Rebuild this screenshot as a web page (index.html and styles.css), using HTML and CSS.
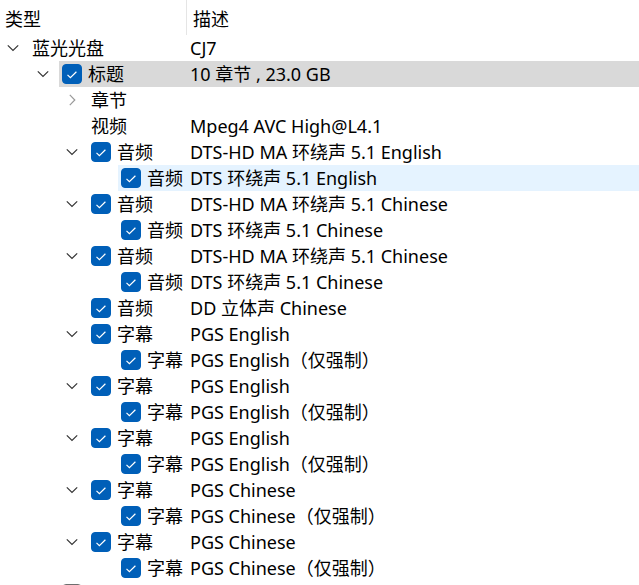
FILE: index.html
```html
<!DOCTYPE html>
<html>
<head>
  <title>光盘内容</title>
  <link rel="stylesheet" href="styles.css">
</head>
<body>
  <div class="tree">
    <div class="header">
      <div class="col-name">类型</div>
      <div class="col-desc">描述</div>
    </div>

    <div class="row lvl0">
      <div class="twisty"><span class="chev open"></span></div>
      <div class="item"><div class="lead"><span class="name">蓝光光盘</span></div><div class="desc">CJ7</div></div>
    </div>
    <div class="row lvl1 selected">
      <div class="twisty"><span class="chev open"></span></div>
      <div class="item"><div class="lead"><span class="check on"></span><span class="name">标题</span></div><div class="desc">10 章节 , 23.0 GB</div></div>
    </div>
    <div class="row lvl2">
      <div class="twisty"><span class="chev closed"></span></div>
      <div class="item"><div class="lead"><span class="name">章节</span></div><div class="desc"></div></div>
    </div>
    <div class="row lvl2">
      <div class="twisty"></div>
      <div class="item"><div class="lead"><span class="name">视频</span></div><div class="desc">Mpeg4 AVC High@L4.1</div></div>
    </div>

    <div class="row lvl2">
      <div class="twisty"><span class="chev open"></span></div>
      <div class="item"><div class="lead"><span class="check on"></span><span class="name">音频</span></div><div class="desc">DTS-HD MA 环绕声 5.1 English</div></div>
    </div>
    <div class="row lvl3 hover">
      <div class="twisty"></div>
      <div class="item"><div class="lead"><span class="check on"></span><span class="name">音频</span></div><div class="desc">DTS 环绕声 5.1 English</div></div>
    </div>
    <div class="row lvl2">
      <div class="twisty"><span class="chev open"></span></div>
      <div class="item"><div class="lead"><span class="check on"></span><span class="name">音频</span></div><div class="desc">DTS-HD MA 环绕声 5.1 Chinese</div></div>
    </div>
    <div class="row lvl3">
      <div class="twisty"></div>
      <div class="item"><div class="lead"><span class="check on"></span><span class="name">音频</span></div><div class="desc">DTS 环绕声 5.1 Chinese</div></div>
    </div>
    <div class="row lvl2">
      <div class="twisty"><span class="chev open"></span></div>
      <div class="item"><div class="lead"><span class="check on"></span><span class="name">音频</span></div><div class="desc">DTS-HD MA 环绕声 5.1 Chinese</div></div>
    </div>
    <div class="row lvl3">
      <div class="twisty"></div>
      <div class="item"><div class="lead"><span class="check on"></span><span class="name">音频</span></div><div class="desc">DTS 环绕声 5.1 Chinese</div></div>
    </div>
    <div class="row lvl2">
      <div class="twisty"></div>
      <div class="item"><div class="lead"><span class="check on"></span><span class="name">音频</span></div><div class="desc">DD 立体声 Chinese</div></div>
    </div>

    <div class="row lvl2">
      <div class="twisty"><span class="chev open"></span></div>
      <div class="item"><div class="lead"><span class="check on"></span><span class="name">字幕</span></div><div class="desc">PGS English</div></div>
    </div>
    <div class="row lvl3">
      <div class="twisty"></div>
      <div class="item"><div class="lead"><span class="check on"></span><span class="name">字幕</span></div><div class="desc">PGS English（仅强制）</div></div>
    </div>
    <div class="row lvl2">
      <div class="twisty"><span class="chev open"></span></div>
      <div class="item"><div class="lead"><span class="check on"></span><span class="name">字幕</span></div><div class="desc">PGS English</div></div>
    </div>
    <div class="row lvl3">
      <div class="twisty"></div>
      <div class="item"><div class="lead"><span class="check on"></span><span class="name">字幕</span></div><div class="desc">PGS English（仅强制）</div></div>
    </div>
    <div class="row lvl2">
      <div class="twisty"><span class="chev open"></span></div>
      <div class="item"><div class="lead"><span class="check on"></span><span class="name">字幕</span></div><div class="desc">PGS English</div></div>
    </div>
    <div class="row lvl3">
      <div class="twisty"></div>
      <div class="item"><div class="lead"><span class="check on"></span><span class="name">字幕</span></div><div class="desc">PGS English（仅强制）</div></div>
    </div>
    <div class="row lvl2">
      <div class="twisty"><span class="chev open"></span></div>
      <div class="item"><div class="lead"><span class="check on"></span><span class="name">字幕</span></div><div class="desc">PGS Chinese</div></div>
    </div>
    <div class="row lvl3">
      <div class="twisty"></div>
      <div class="item"><div class="lead"><span class="check on"></span><span class="name">字幕</span></div><div class="desc">PGS Chinese（仅强制）</div></div>
    </div>
    <div class="row lvl2">
      <div class="twisty"><span class="chev open"></span></div>
      <div class="item"><div class="lead"><span class="check on"></span><span class="name">字幕</span></div><div class="desc">PGS Chinese</div></div>
    </div>
    <div class="row lvl3">
      <div class="twisty"></div>
      <div class="item"><div class="lead"><span class="check on"></span><span class="name">字幕</span></div><div class="desc">PGS Chinese（仅强制）</div></div>
    </div>

    <!-- next title, only its checkbox edge is in view -->
    <div class="row lvl1">
      <div class="twisty"><span class="chev closed"></span></div>
      <div class="item"><div class="lead"><span class="check"></span></div><div class="desc"></div></div>
    </div>
  </div>
</body>
</html>
```

FILE: styles.css
```css
:root {
  --text-color: #000;
  --divider: #e5e5e5;
  --accent: #005fb8;
  --selected-bg: #d9d9d9;
  --hover-bg: #e5f3ff;
  --row-height: 26px;
  --desc-left: 190px;
}

html, body {
  margin: 0;
  height: 100%;
  overflow: hidden;
  background: #fff;
}

body {
  font-family: "Noto Sans", "Noto Sans CJK SC", sans-serif;
  font-size: 18px;
  color: var(--text-color);
}

.header {
  display: flex;
  height: 35px;
  align-items: stretch;
}

.col-name {
  width: 181px;
  padding-left: 5px;
  border-right: 1px solid var(--divider);
  display: flex;
  align-items: center;
}

.col-desc {
  padding-left: 6px;
  display: flex;
  align-items: center;
}

.row {
  display: flex;
  height: var(--row-height);
  line-height: var(--row-height);
  white-space: nowrap;
}

/* --x is where the item (highlight) starts for each level */
.lvl0 { --x: 29px; }
.lvl1 { --x: 59px; }
.lvl2 { --x: 88px; }
.lvl3 { --x: 118px; }

.twisty {
  box-sizing: border-box;
  width: var(--x);
  padding-left: calc(var(--x) - 22px);
  display: flex;
  align-items: center;
  flex: none;
}

.chev {
  display: block;
  width: 12px;
  height: 12px;
  background-repeat: no-repeat;
  background-position: center;
}

.chev.open {
  background-image: url("data:image/svg+xml,%3Csvg xmlns='http://www.w3.org/2000/svg' width='12' height='12' viewBox='0 0 12 12'%3E%3Cpath d='M0.8 3.4 L6 8.4 L11.2 3.4' fill='none' stroke='%23333' stroke-width='1.2'/%3E%3C/svg%3E");
}

.chev.closed {
  background-image: url("data:image/svg+xml,%3Csvg xmlns='http://www.w3.org/2000/svg' width='12' height='12' viewBox='0 0 12 12'%3E%3Cpath d='M3.8 0.8 L8.8 6 L3.8 11.2' fill='none' stroke='%23999' stroke-width='1.2'/%3E%3C/svg%3E");
}

.item {
  flex: 1;
  display: flex;
  min-width: 0;
}

.selected .item { background: var(--selected-bg); }
.hover .item { background: var(--hover-bg); }

.lead {
  box-sizing: border-box;
  width: calc(var(--desc-left) - var(--x));
  padding-left: 3px;
  display: flex;
  align-items: center;
  gap: 6px;
  flex: none;
}

.check {
  box-sizing: border-box;
  width: 20px;
  height: 20px;
  border-radius: 4px;
  border: 1px solid #6e6e6e;
  background: #fff;
  flex: none;
}

.check.on {
  border-color: var(--accent);
  background-color: var(--accent);
  background-repeat: no-repeat;
  background-position: center;
  background-image: url("data:image/svg+xml,%3Csvg xmlns='http://www.w3.org/2000/svg' width='18' height='18' viewBox='0 0 18 18'%3E%3Cpath d='M4.5 9.8 L7.4 12.7 L13.4 6.8' fill='none' stroke='%23fff' stroke-width='1.2'/%3E%3C/svg%3E");
}

.desc {
  flex: 1;
}
```
